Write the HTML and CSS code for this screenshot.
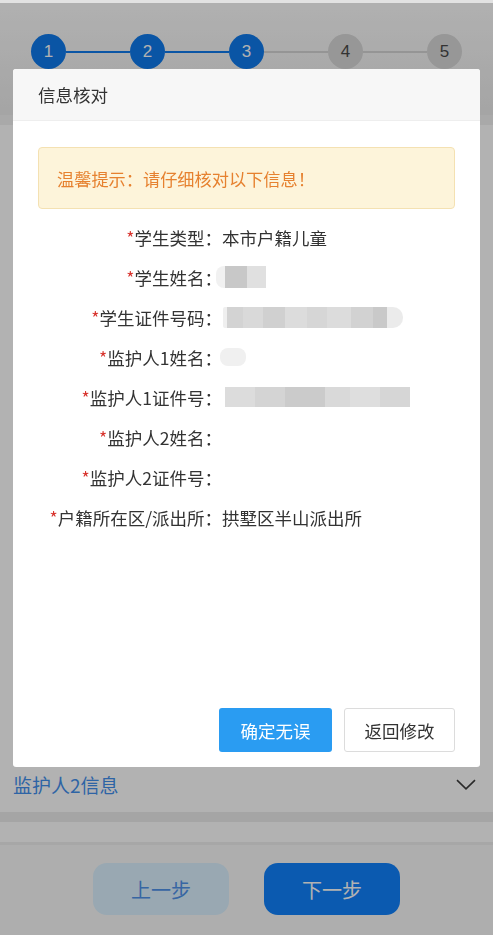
FILE: index.html
```html
<!DOCTYPE html>
<html lang="zh-CN">
<head>
<meta charset="utf-8">
<title>信息核对</title>
<link rel="stylesheet" href="styles.css">
</head>
<body>
<div class="page">
  <header class="steps-head">
    <div class="steps">
      <span class="step done">1</span><span class="bar done"></span>
      <span class="step done">2</span><span class="bar done"></span>
      <span class="step done">3</span><span class="bar"></span>
      <span class="step">4</span><span class="bar"></span>
      <span class="step">5</span>
    </div>
  </header>
  <main class="form">
    <section class="card card-main"></section>
    <section class="collapse">
      <span class="collapse-title">监护人2信息</span>
      <svg class="chevron" width="20" height="11" viewBox="0 0 20 11"><path d="M1 1.2 L10 9.8 L19 1.2" fill="none" stroke="#3d3d3d" stroke-width="1.6"/></svg>
    </section>
    <div class="sep"></div>
    <section class="card card-small"></section>
  </main>
  <footer class="actions">
    <button class="btn btn-prev">上一步</button>
    <button class="btn btn-next">下一步</button>
  </footer>
</div>
<div class="mask"></div>
<div class="dialog">
  <div class="dialog-head">信息核对</div>
  <div class="dialog-body">
    <div class="tip">温馨提示：请仔细核对以下信息！</div>
    <dl class="info">
      <div class="row"><dt><i class="req">*</i>学生类型：</dt><dd>本市户籍儿童</dd></div>
      <div class="row"><dt><i class="req">*</i>学生姓名：</dt><dd><span class="blur blur-name"></span></dd></div>
      <div class="row"><dt><i class="req">*</i>学生证件号码：</dt><dd><span class="blur blur-id"></span></dd></div>
      <div class="row"><dt><i class="req">*</i>监护人1姓名：</dt><dd><span class="blur blur-gname"></span></dd></div>
      <div class="row"><dt><i class="req">*</i>监护人1证件号：</dt><dd><span class="blur blur-gid"></span></dd></div>
      <div class="row"><dt><i class="req">*</i>监护人2姓名：</dt><dd></dd></div>
      <div class="row"><dt><i class="req">*</i>监护人2证件号：</dt><dd></dd></div>
      <div class="row"><dt><i class="req">*</i>户籍所在区/派出所：</dt><dd>拱墅区半山派出所</dd></div>
    </dl>
  </div>
  <div class="dialog-foot">
    <button class="btn-ok">确定无误</button>
    <button class="btn-back">返回修改</button>
  </div>
</div>
</body>
</html>
```

FILE: styles.css
```css
* { box-sizing: border-box; }
body {
  margin: 0;
  font-family: "Noto Sans CJK SC", "Noto Sans", sans-serif;
  background: #f2f2f2;
}
.page {
  height: 935px;
  display: flex;
  flex-direction: column;
  background: #f2f2f2;
  overflow: hidden;
}
.steps-head {
  height: 115px;
  border-top: 3px solid #e2e2e2;
  background: linear-gradient(#fdfdfd, #ececec);
}
.steps {
  display: flex;
  align-items: center;
  padding: 31px 31px 0;
}
.step {
  flex: none;
  width: 35px;
  height: 35px;
  border-radius: 50%;
  background: #d8d8d8;
  color: #4a4a4a;
  font-family: "Liberation Sans", Arial, sans-serif;
  font-size: 17px;
  display: flex;
  align-items: center;
  justify-content: center;
}
.step.done {
  background: #0f7aec;
  color: #fff;
}
.bar {
  flex: 1;
  height: 2px;
  background: #d6d6d6;
}
.bar.done { background: #0f7aec; }
.form {
  flex: 1;
  display: flex;
  flex-direction: column;
  margin-top: 10px;
}
.card { background: #fff; }
.card-main { height: 632px; }
.collapse {
  height: 55px;
  background: #fff;
  display: flex;
  align-items: center;
  justify-content: space-between;
  padding: 0 17px 0 13px;
}
.collapse-title {
  font-size: 19px;
  color: #4390ed;
}
.sep {
  height: 10px;
  background: #ececec;
}
.card-small { height: 20px; }
.actions {
  height: 93px;
  border-top: 3px solid #efefef;
  background: #fafafa;
  display: flex;
  justify-content: center;
  gap: 35px;
  padding-top: 18px;
}
.btn {
  width: 136px;
  height: 52px;
  border: none;
  border-radius: 14px;
  font-family: inherit;
  font-size: 20px;
}
.btn-prev {
  background: #dbf1ff;
  color: #4f92ea;
}
.btn-next {
  background: #1082fd;
  color: #fff;
}
.mask {
  position: fixed;
  top: 3px;
  left: 0;
  right: 0;
  bottom: 0;
  background: rgba(0, 0, 0, 0.3);
}
.dialog {
  position: fixed;
  top: 69px;
  left: 13px;
  width: 467px;
  height: 698px;
  background: #fff;
  border-radius: 3px;
  display: flex;
  flex-direction: column;
  overflow: hidden;
}
.dialog-head {
  height: 52px;
  background: #f7f7f7;
  border-bottom: 1px solid #eeeeee;
  padding-left: 25px;
  display: flex;
  align-items: center;
  font-size: 17.5px;
  color: #333;
}
.dialog-body {
  flex: 1;
  padding: 26px 25px 0;
}
.tip {
  height: 62px;
  background: #fdf4da;
  border: 1px solid #f4e1b2;
  border-radius: 4px;
  padding-left: 18px;
  display: flex;
  align-items: center;
  font-size: 17.2px;
  color: #e6812f;
}
.info { margin: 8px 0 0; }
.row {
  display: grid;
  grid-template-columns: 184px 1fr;
  height: 40px;
  align-items: center;
  font-size: 17.5px;
  color: #333;
}
.row dt {
  text-align: right;
  white-space: nowrap;
}
.row dd {
  margin: 0;
  display: flex;
  align-items: center;
  white-space: nowrap;
}
.req {
  font-style: normal;
  color: #d8322c;
}
.blur {
  display: inline-block;
  filter: blur(0.6px);
}
.blur-name {
  width: 50px;
  height: 22px;
  margin-left: -6px;
  border-radius: 8px 0 0 8px;
  background: linear-gradient(90deg, #f1f1f1 0 9px, #c8c8c8 9px 31px, #e0e0e0 31px);
}
.blur-id {
  width: 180px;
  height: 21px;
  margin-left: 1px;
  border-radius: 2px 10px 10px 2px;
  background: linear-gradient(90deg, #efefef 0 4px, #d3d3d3 4px 20px, #d9d9d9 20px 40px, #d0d0d0 40px 62px, #dcdcdc 62px 84px, #d6d6d6 84px 104px, #dcdcdc 104px 128px, #d2d2d2 128px 150px, #c9c9c9 150px 164px, #ebebeb 164px);
}
.blur-gname {
  width: 26px;
  height: 18px;
  margin-left: -2px;
  border-radius: 8px;
  background: #f0f0f0;
}
.blur-gid {
  width: 185px;
  height: 20px;
  margin-left: 3px;
  background: linear-gradient(90deg, #dcdcdc 0 30px, #d4d4d4 30px 60px, #cbcbcb 60px 100px, #d9d9d9 100px 125px, #dedede 125px 155px, #d6d6d6 155px);
}
.dialog-foot {
  display: flex;
  justify-content: flex-end;
  gap: 12px;
  padding: 0 25px 15px;
}
.btn-ok,
.btn-back {
  height: 44px;
  border-radius: 3px;
  font-family: inherit;
  font-size: 17.5px;
}
.btn-ok {
  width: 113px;
  border: none;
  background: #2a9cf2;
  color: #fff;
}
.btn-back {
  width: 111px;
  border: 1px solid #dcdcdc;
  background: #fff;
  color: #333;
}
```
